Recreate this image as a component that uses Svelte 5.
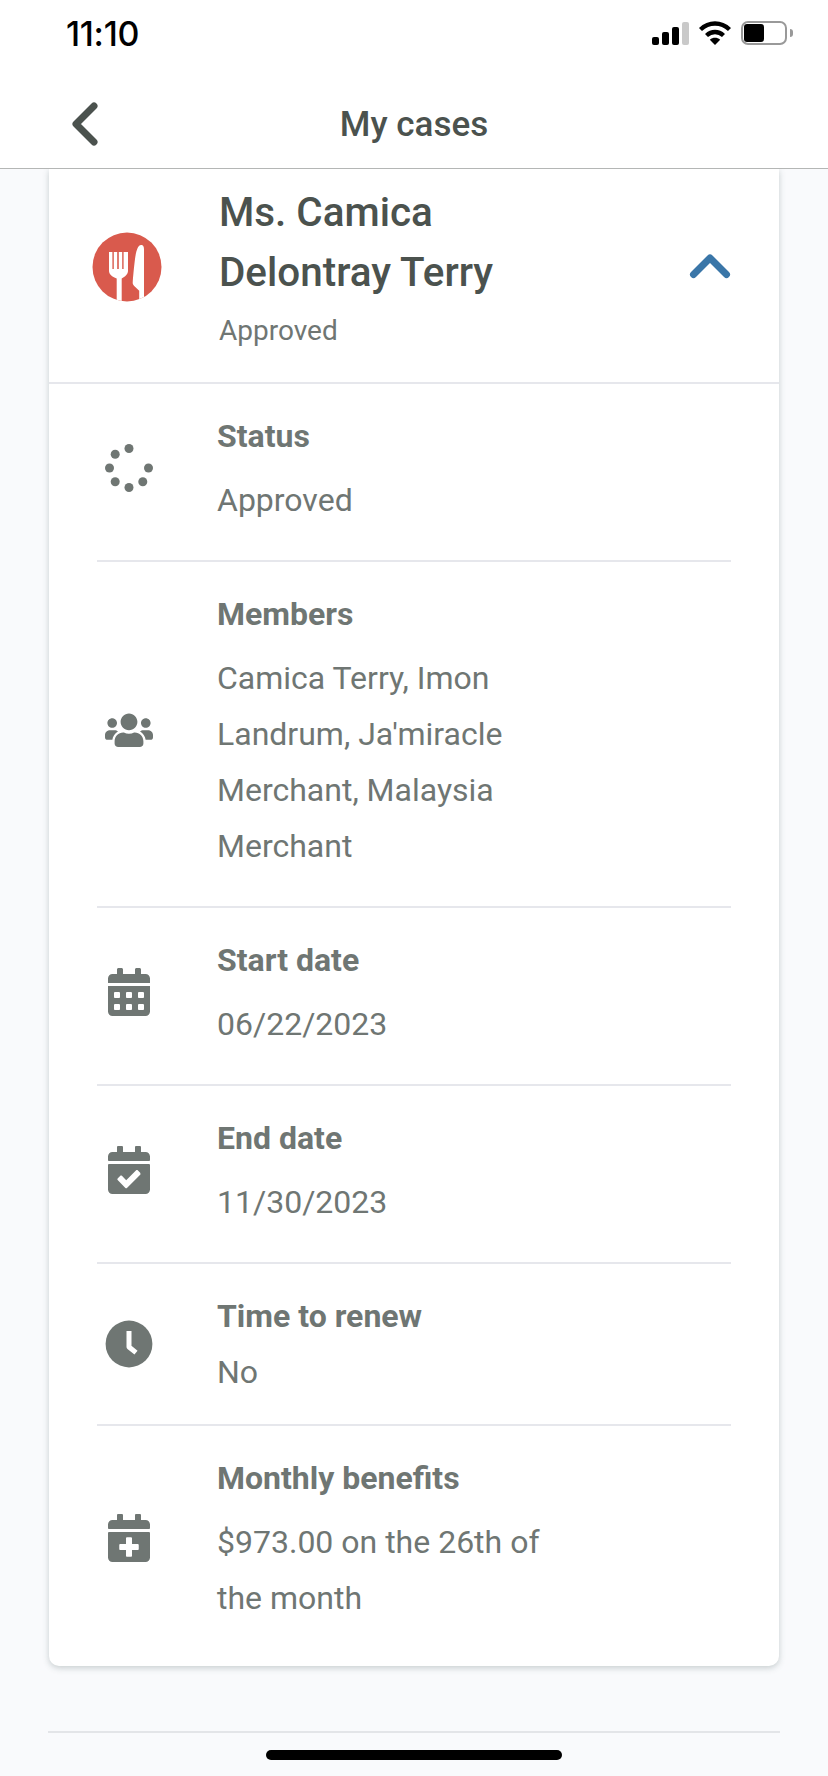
<script>
  const GRAY = '#6f7673'

  const rows = [
    { icon: 'spinner', label: 'Status', lines: ['Approved'] },
    { icon: 'users', label: 'Members', lines: ['Camica Terry, Imon', 'Landrum, Ja\'miracle', 'Merchant, Malaysia', 'Merchant'] },
    { icon: 'calendar', label: 'Start date', lines: ['06/22/2023'] },
    { icon: 'check', label: 'End date', lines: ['11/30/2023'] },
    { icon: 'clock', label: 'Time to renew', lines: ['No'], tight: true },
    { icon: 'plus', label: 'Monthly benefits', lines: ['$973.00 on the 26th of', 'the month'] },
  ]

  const CAL_TOP = 'M436 160H12c-6.6 0-12-5.4-12-12v-36c0-26.5 21.5-48 48-48h48V12c0-6.6 5.4-12 12-12h40c6.6 0 12 5.4 12 12v52h128V12c0-6.6 5.4-12 12-12h40c6.6 0 12 5.4 12 12v52h48c26.5 0 48 21.5 48 48v36c0 6.6-5.4 12-12 12z'
  const CAL_CHECK = CAL_TOP + 'M12 192h424c6.6 0 12 5.4 12 12v260c0 26.5-21.5 48-48 48H48c-26.5 0-48-21.5-48-48V204c0-6.6 5.4-12 12-12zm333.3 95.9l-28.2-28.4c-4.7-4.7-12.2-4.8-16.9-.1L194.2 364.8l-46-46.4c-4.7-4.7-12.2-4.8-16.9-.1l-28.4 28.2c-4.7 4.7-4.8 12.2-.1 16.9l82.6 83.3c4.7 4.7 12.2 4.8 16.9.1l141-139.9c4.7-4.7 4.8-12.3.1-17z'
  const CAL_PLUS = CAL_TOP + 'M12 192h424c6.6 0 12 5.4 12 12v260c0 26.5-21.5 48-48 48H48c-26.5 0-48-21.5-48-48V204c0-6.6 5.4-12 12-12zm316 140c0-6.6-5.4-12-12-12h-60v-60c0-6.6-5.4-12-12-12h-40c-6.6 0-12 5.4-12 12v60h-60c-6.6 0-12 5.4-12 12v40c0 6.6 5.4 12 12 12h60v60c0 6.6 5.4 12 12 12h40c6.6 0 12-5.4 12-12v-60h60c6.6 0 12-5.4 12-12v-40z'
  const CAL_GRID = 'M0 464c0 26.5 21.5 48 48 48h352c26.5 0 48-21.5 48-48V192H0v272zm320-196c0-6.6 5.4-12 12-12h40c6.6 0 12 5.4 12 12v40c0 6.6-5.4 12-12 12h-40c-6.6 0-12-5.4-12-12v-40zm0 128c0-6.6 5.4-12 12-12h40c6.6 0 12 5.4 12 12v40c0 6.6-5.4 12-12 12h-40c-6.6 0-12-5.4-12-12v-40zM192 268c0-6.6 5.4-12 12-12h40c6.6 0 12 5.4 12 12v40c0 6.6-5.4 12-12 12h-40c-6.6 0-12-5.4-12-12v-40zm0 128c0-6.6 5.4-12 12-12h40c6.6 0 12 5.4 12 12v40c0 6.6-5.4 12-12 12h-40c-6.6 0-12-5.4-12-12v-40zM64 268c0-6.6 5.4-12 12-12h40c6.6 0 12 5.4 12 12v40c0 6.6-5.4 12-12 12H76c-6.6 0-12-5.4-12-12v-40zm0 128c0-6.6 5.4-12 12-12h40c6.6 0 12 5.4 12 12v40c0 6.6-5.4 12-12 12H76c-6.6 0-12-5.4-12-12v-40zM400 64h-48V16c0-8.8-7.2-16-16-16h-32c-8.8 0-16 7.2-16 16v48H160V16c0-8.8-7.2-16-16-16h-32c-8.8 0-16 7.2-16 16v48H48C21.5 64 0 85.5 0 112v48h448v-48c0-26.5-21.5-48-48-48z'
  const USERS = 'M96 224c35.3 0 64-28.7 64-64s-28.7-64-64-64-64 28.7-64 64 28.7 64 64 64zm448 0c35.3 0 64-28.7 64-64s-28.7-64-64-64-64 28.7-64 64 28.7 64 64 64zm32 32h-64c-17.6 0-33.5 7.1-45.1 18.6 40.3 22.1 68.9 62 75.1 109.4h66c17.7 0 32-14.3 32-32v-32c0-35.3-28.7-64-64-64zm-256 0c61.9 0 112-50.1 112-112S381.9 32 320 32 208 82.1 208 144s50.1 112 112 112zm76.8 32h-8.3c-20.8 10-43.9 16-68.5 16s-47.6-6-68.5-16h-8.3C179.6 288 128 339.6 128 403.2V432c0 26.5 21.5 48 48 48h288c26.5 0 48-21.5 48-48v-28.8c0-63.6-51.6-115.2-115.2-115.2zm-223.7-13.4C161.5 263.1 145.6 256 128 256H64c-35.3 0-64 28.7-64 64v32c0 17.7 14.3 32 32 32h65.9c6.3-47.4 34.9-87.3 75.2-109.4z'

  // dots of the spinner, the top right one is missing on purpose
  const DOTS = [[24, 4.5], [10.2, 10.2], [4.5, 24], [10.2, 37.8], [24, 43.5], [37.8, 37.8], [43.5, 24]]
</script>

<div class="screen">
  <div class="top">
    <div class="status-bar">
      <span class="time">11:10</span>
      <div class="status-icons">
        <svg width="38" height="23" viewBox="0 0 38 23">
          <rect x="0" y="15" width="7" height="8" rx="2" fill="#000" />
          <rect x="10" y="10" width="7" height="13" rx="2" fill="#000" />
          <rect x="20" y="5" width="7" height="18" rx="2" fill="#000" />
          <rect x="30" y="0" width="7" height="23" rx="2" fill="#c9c9c9" />
        </svg>
        <svg width="34" height="24" viewBox="0 0 34 24">
          <path d="M2.5 8.5C11 .5 23 .5 31.5 8.5" fill="none" stroke="#000" stroke-width="4.4" />
          <path d="M8.5 14.5c5-4.6 12-4.6 17 0" fill="none" stroke="#000" stroke-width="4.4" />
          <path d="M11.8 18.8c3.2-2.6 7.2-2.6 10.4 0L17 24z" fill="#000" />
        </svg>
        <div class="battery"><div class="battery-fill"></div></div>
      </div>
    </div>
    <div class="nav">
      <svg class="back" width="30" height="46" viewBox="0 0 30 46">
        <path d="M24 5L6 23l18 18" fill="none" stroke="#4b524e" stroke-width="7" stroke-linecap="round" stroke-linejoin="round" />
      </svg>
      <span class="nav-title">My cases</span>
    </div>
  </div>

  <div class="card">
    <div class="card-head">
      <svg class="avatar" width="70" height="70" viewBox="0 0 70 70">
        <clipPath id="plate"><circle cx="35" cy="35" r="34.5" /></clipPath>
        <circle cx="35" cy="35" r="34.5" fill="#d95a4d" />
        <g clip-path="url(#plate)" fill="#fff">
          <path d="M17 20h3.4v17h1.4V20h3.4v17h1.6V20h3.4v17h1.4V20H36v19c0 3-3 6-6.3 7.5V70h-5V46.500C20 45 17 42 17 39z" />
          <path d="M52 18c0-4-1-5-3-5-3 0-5 6-6 14-1 8-2 18-2.300 24 0 1 .7 2 1.500 3l5 4.700V70H52z" />
        </g>
      </svg>
      <div class="head-text">
        <div class="name">Ms. Camica<br />Delontray Terry</div>
        <div class="head-status">Approved</div>
      </div>
      <svg class="toggle" width="42" height="26" viewBox="0 0 42 26">
        <path d="M4.5 21.5L21 5l16.5 16.5" fill="none" stroke="#3a76a8" stroke-width="7" stroke-linecap="round" stroke-linejoin="round" />
      </svg>
    </div>

    <div class="rows">
      {#each rows as row (row.label)}
        <div class="row" class:tight={row.tight}>
          <div class="row-icon">
            {#if row.icon === 'spinner'}
              <svg width="48" height="48" viewBox="0 0 48 48">
                {#each DOTS as d}
                  <circle cx={d[0]} cy={d[1]} r="4.5" fill={GRAY} />
                {/each}
              </svg>
            {:else if row.icon === 'users'}
              <svg width="48" height="38.4" viewBox="0 0 640 512"><path d={USERS} fill={GRAY} /></svg>
            {:else if row.icon === 'calendar'}
              <svg width="42" height="48" viewBox="0 0 448 512"><path d={CAL_GRID} fill={GRAY} /></svg>
            {:else if row.icon === 'check'}
              <svg width="42" height="48" viewBox="0 0 448 512"><path d={CAL_CHECK} fill={GRAY} /></svg>
            {:else if row.icon === 'plus'}
              <svg width="42" height="48" viewBox="0 0 448 512"><path d={CAL_PLUS} fill={GRAY} /></svg>
            {:else}
              <svg width="48" height="48" viewBox="0 0 48 48">
                <circle cx="24" cy="24" r="23.4" fill={GRAY} />
                <path d="M24 11v16l7 5.6" fill="none" stroke="#fff" stroke-width="5" stroke-linejoin="round" />
              </svg>
            {/if}
          </div>
          <div class="row-text">
            <div class="label">{row.label}</div>
            <div class="value">
              {#each row.lines as line}
                <div>{line}</div>
              {/each}
            </div>
          </div>
        </div>
      {/each}
    </div>
  </div>

  <div class="footer-line"></div>
  <div class="home-bar"></div>
</div>

<style>
  :global(body) {
    margin: 0;
    background: #f9fafc;
  }

  .screen {
    width: 828px;
    height: 1776px;
    overflow: hidden;
    display: flex;
    flex-direction: column;
    background: #f9fafc;
    font-family: Roboto, 'Liberation Sans', sans-serif;
  }

  .top {
    position: relative;
    z-index: 1;
    background: #fff;
    border-bottom: 1px solid #b4b6b5;
    height: 168px;
  }

  .status-bar {
    height: 66px;
    display: flex;
    align-items: center;
    justify-content: space-between;
    padding: 0 41px 0 66px;
  }

  .time {
    font-family: Inter, sans-serif;
    font-size: 34px;
    font-weight: 500;
    color: #000;
    letter-spacing: -0.3px;
  }

  .status-icons {
    display: flex;
    align-items: center;
    gap: 8px;
  }

  .battery {
    position: relative;
    width: 40px;
    height: 18px;
    border: 2px solid #999;
    border-radius: 7px;
    padding: 1px;
    margin-left: 1px;
  }

  .battery::after {
    content: '';
    position: absolute;
    right: -8px;
    top: 6px;
    width: 3px;
    height: 8px;
    border-radius: 0 3px 3px 0;
    background: #999;
  }

  .battery-fill {
    width: 20px;
    height: 100%;
    background: #000;
    border-radius: 3px;
  }

  .nav {
    position: relative;
    height: 102px;
    display: flex;
    align-items: center;
    justify-content: center;
  }

  .back {
    position: absolute;
    left: 70px;
    top: 35px;
  }

  .nav-title {
    font-size: 35px;
    font-weight: 500;
    color: #4b524e;
    margin-top: 14px;
  }

  .card {
    margin: 0 49px;
    background: #fff;
    border-radius: 0 0 10px 10px;
    box-shadow: 0 2px 6px rgba(70, 90, 90, 0.28);
  }

  .card-head {
    height: 195px;
    display: flex;
    align-items: center;
    padding: 0 48px 18px 43px;
    border-bottom: 2px solid #e6e7ec;
  }

  .avatar {
    flex-shrink: 0;
    margin-right: 57px;
  }

  .head-text {
    flex: 1;
  }

  .name {
    font-size: 40.4px;
    font-weight: 500;
    line-height: 60px;
    color: #4b524e;
    padding-top: 1px;
  }

  .head-status {
    font-size: 28px;
    line-height: 40px;
    margin-top: 8px;
    color: #6f7673;
  }

  .toggle {
    flex-shrink: 0;
    margin-top: -2px;
  }

  .rows {
    padding: 0 48px;
  }

  .row {
    display: flex;
    align-items: center;
    padding: 26px 0 32px;
    border-bottom: 2px solid #e6e7ec;
  }

  .row.tight {
    padding-bottom: 24px;
  }

  .row:last-child {
    border-bottom: 0;
    padding-bottom: 40px;
  }

  .row-icon {
    width: 64px;
    flex-shrink: 0;
    margin: 0 56px 2px 0;
    display: flex;
    justify-content: center;
  }

  .label {
    font-size: 32px;
    font-weight: 700;
    line-height: 52px;
    color: #6f7673;
  }

  .value {
    font-size: 32px;
    line-height: 56px;
    margin-top: 10px;
    color: #6f7673;
  }

  .tight .value {
    margin-top: 2px;
  }

  .footer-line {
    margin: 65px 48px 0;
    height: 2px;
    background: #e3e5e8;
    flex-shrink: 0;
  }

  .home-bar {
    margin: 17px auto 0;
    width: 296px;
    height: 10px;
    border-radius: 5px;
    background: #000;
    flex-shrink: 0;
  }
</style>
